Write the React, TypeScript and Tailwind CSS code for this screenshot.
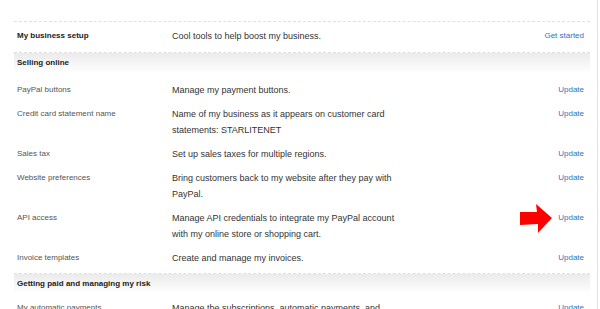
import React from "react";

type Row = { label: string; desc: React.ReactNode; link: string };

const selling: Row[] = [
  { label: "PayPal buttons", desc: "Manage my payment buttons.", link: "Update" },
  {
    label: "Credit card statement name",
    desc: "Name of my business as it appears on customer card statements: STARLITENET",
    link: "Update",
  },
  { label: "Sales tax", desc: "Set up sales taxes for multiple regions.", link: "Update" },
  {
    label: "Website preferences",
    desc: "Bring customers back to my website after they pay with PayPal.",
    link: "Update",
  },
  {
    label: "API access",
    desc: "Manage API credentials to integrate my PayPal account with my online store or shopping cart.",
    link: "Update",
  },
  { label: "Invoice templates", desc: "Create and manage my invoices.", link: "Update" },
];

const gettingPaid: Row[] = [
  {
    label: "My automatic payments",
    desc: "Manage the subscriptions, automatic payments, and installment plans I have with merchants.",
    link: "Update",
  },
];

function ItemRow({ row, bold, pt = "pt-[8px]" }: { row: Row; bold?: boolean; pt?: string }) {
  return (
    <div className={`grid grid-cols-[158px_228px_1fr] ${pt}`}>
      <div
        className={`pl-[3px] text-[8px] leading-[16px] ${
          bold ? "font-bold text-[#222]" : "text-[#555]"
        }`}
      >
        {row.label}
      </div>
      <div className="text-[9px] leading-[16px] text-[#333]">{row.desc}</div>
      <div className="pr-[6px] text-right text-[8px] leading-[16px] text-[#3272bb]">
        {row.link}
      </div>
    </div>
  );
}

function Header({ title }: { title: string }) {
  return (
    <div className="border-t border-dashed border-[#e0e0e0]">
      <div className="flex h-[20px] items-center bg-gradient-to-b from-[#ebebeb] to-white pl-[3px] text-[8px] font-bold text-[#222]">
        {title}
      </div>
    </div>
  );
}

export default function App() {
  return (
    <div
      className="relative flex h-[309px] w-[600px] overflow-hidden bg-white"
      style={{ fontFamily: '"Liberation Sans", Arial, sans-serif' }}
    >
      <div className="ml-[14px] w-[576px] pt-[21px]">
        <div className="border-t border-dashed border-[#e0e0e0] pb-[8px]">
          <ItemRow
            row={{ label: "My business setup", desc: "Cool tools to help boost my business.", link: "Get started" }}
            bold
            pt="pt-[6px]"
          />
        </div>
        <Header title="Selling online" />
        <div className="pb-[7px] pt-px">
          {selling.map((r) => (
            <ItemRow key={r.label} row={r} />
          ))}
        </div>
        <Header title="Getting paid and managing my risk" />
        <div className="pb-[7px]">
          {gettingPaid.map((r) => (
            <ItemRow key={r.label} row={r} pt="pt-[6px]" />
          ))}
        </div>
      </div>
      <div className="ml-[7px] w-px self-stretch bg-[#e2e2e2]" />
      <svg
        className="absolute left-[520px] top-[204px]"
        width="33"
        height="30"
        viewBox="0 0 33 30"
      >
        <polygon points="0,8 17,8 16,0 32,14 18,29 18,20 0,21" fill="#ff0000" />
      </svg>
    </div>
  );
}
